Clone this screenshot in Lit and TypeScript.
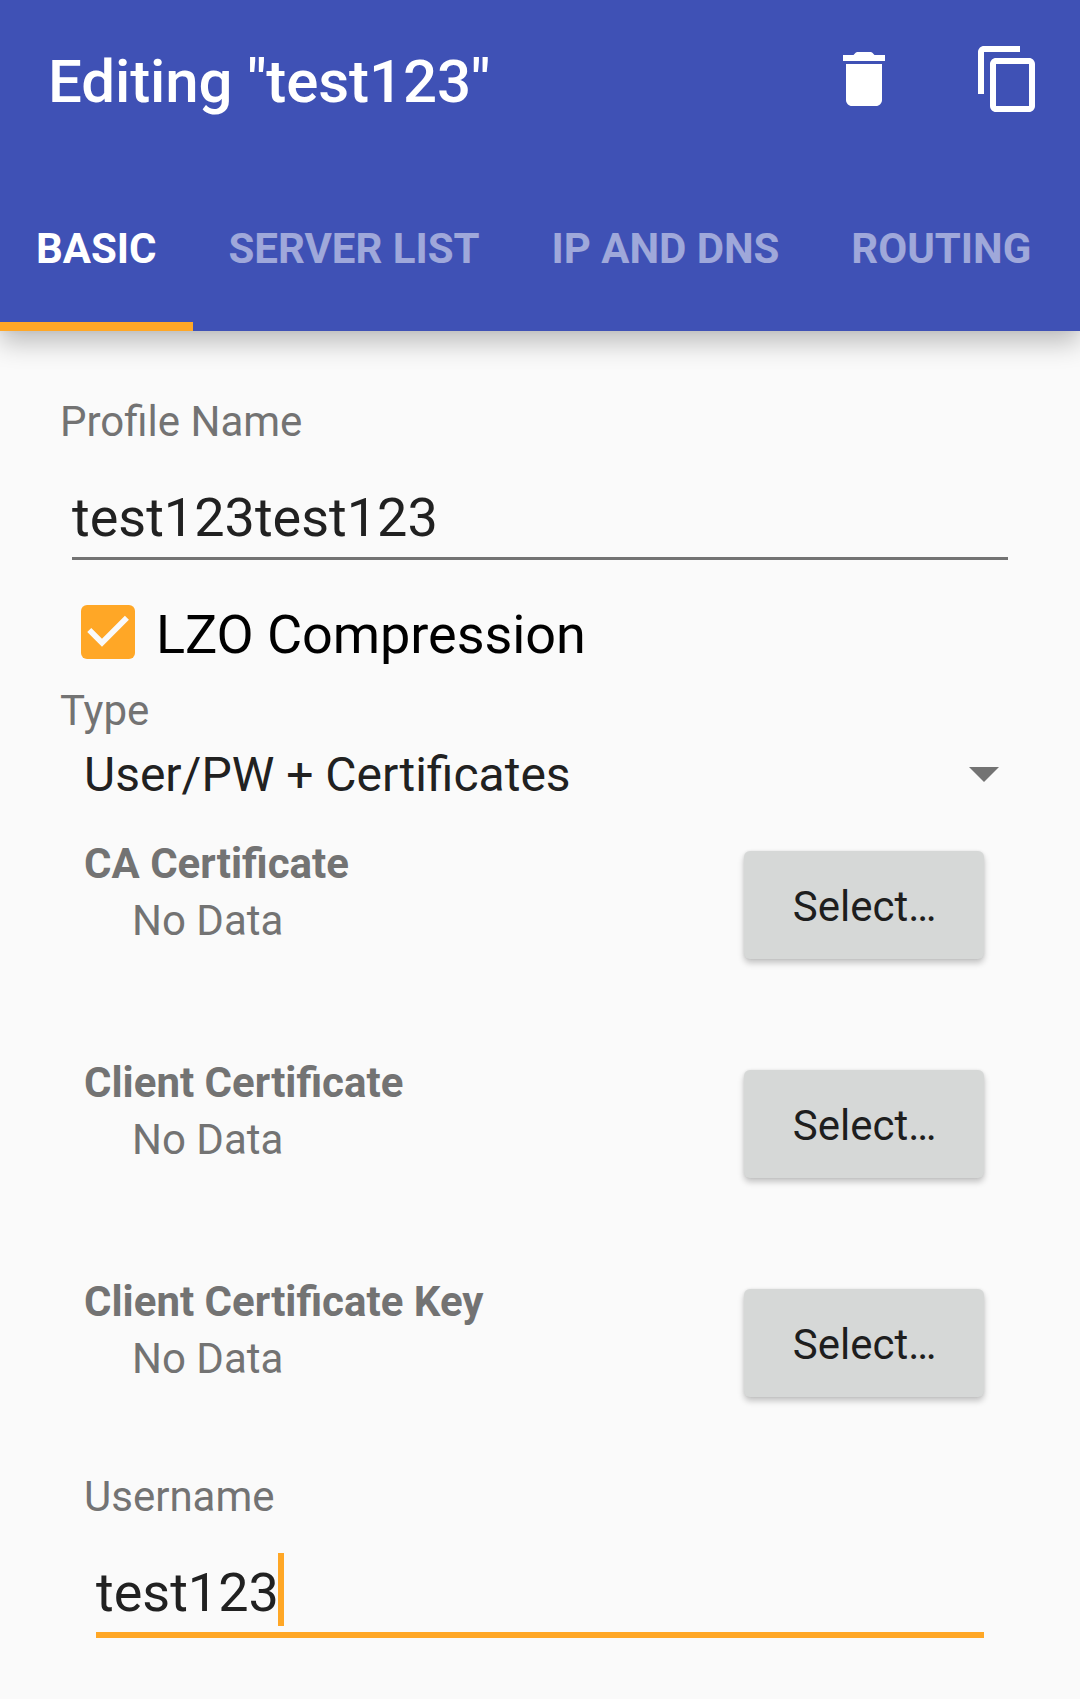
import { LitElement, html, css } from "lit";
import { customElement, property } from "lit/decorators.js";

@customElement("cert-row")
class CertRow extends LitElement {
  @property() name = "";

  static styles = css`
    :host { display: flex; justify-content: space-between; align-items: flex-start; height: 219px; }
    .name, .state { font-size: 42px; line-height: 50px; color: #737373; white-space: nowrap; }
    .name { font-weight: 700; }
    .state { margin-top: 7px; padding-left: 48px; }
    .select {
      display: flex; align-items: center; justify-content: center;
      box-sizing: border-box; width: 240px; height: 108px; margin: 12px 0 0; padding: 4px 0 0 1px;
      border: 0; border-radius: 6px; background: #d6d8d7; color: #1e1e1e;
      font: 400 42px/50px Roboto, sans-serif;
      box-shadow: 0 4px 6px rgba(0, 0, 0, 0.22), 0 0 3px rgba(0, 0, 0, 0.08);
    }
  `;

  render() {
    return html`
      <div>
        <div class="name">${this.name}</div>
        <div class="state">No Data</div>
      </div>
      <button class="select">Select…</button>
    `;
  }
}

@customElement("app-root")
class AppRoot extends LitElement {
  private tabs = ["BASIC", "SERVER LIST", "IP AND DNS", "ROUTING"];
  private certs = ["CA Certificate", "Client Certificate", "Client Certificate Key"];

  static styles = css`
    :host {
      display: block; width: 1080px; height: 1699px; overflow: hidden;
      background: #fafafa; font-family: Roboto, sans-serif; color: #212121;
    }
    .header {
      display: flex; flex-direction: column; height: 331px; background: #3f51b5; color: #fff;
      box-shadow: 0 12px 24px rgba(0, 0, 0, 0.24), 0 0 8px rgba(0, 0, 0, 0.05);
    }
    .bar { display: flex; align-items: center; height: 158px; padding: 0 36px 0 48px; }
    .title {
      flex: 1; margin: 0; padding-top: 5px;
      font-size: 60px; line-height: 70px; font-weight: 500; letter-spacing: -0.1px;
    }
    .icon { display: block; width: 72px; height: 72px; fill: currentColor; }
    .actions { display: flex; gap: 72px; }
    .tabs { display: flex; flex: 1; }
    .tab {
      display: flex; align-items: center; box-sizing: border-box; padding: 17px 36px 0;
      border-bottom: 9px solid transparent;
      font-size: 42px; line-height: 50px; font-weight: 700; white-space: nowrap;
      letter-spacing: -0.03px; color: rgba(255, 255, 255, 0.5);
    }
    .tab.active { color: #fff; border-bottom-color: #ffa726; }
    .form { display: flex; flex-direction: column; padding: 66px 72px 0 60px; }
    .label { font-size: 42px; line-height: 50px; color: #737373; }
    .field {
      box-sizing: border-box; font-size: 54px; line-height: 64px;
      display: flex; align-items: flex-start;
    }
    .profile { margin: 39px 0 0 12px; height: 74px; border-bottom: 3px solid #737373; }
    .check { display: flex; align-items: center; gap: 21px; margin: 43px 0 0 21px; height: 58px; }
    .box { display: block; width: 54px; height: 54px; }
    .check-label {
      font-size: 54px; line-height: 64px; letter-spacing: -0.07px; color: #000; padding-top: 5px;
    }
    .type { margin-top: 25px; }
    .spinner {
      display: flex; align-items: center; justify-content: space-between;
      margin: 11px 9px 0 24px; height: 56px; font-size: 48px; line-height: 56px;
    }
    .arrow { display: block; width: 30px; height: 15px; margin-bottom: 1px; fill: #737373; }
    .details { display: flex; flex-direction: column; margin: 36px 24px 0 24px; }
    .user-label { margin-top: -24px; }
    .user { margin: 29px 0 0 12px; height: 87px; border-bottom: 6px solid #ffa726; }
    .user-text { padding-top: 10px; }
    .caret { width: 6px; height: 73px; margin: 2px 0 0 -1px; background: #ffa726; }
  `;

  render() {
    return html`
      <header class="header">
        <div class="bar">
          <h1 class="title">Editing "test123"</h1>
          <div class="actions">
            <svg class="icon" viewBox="0 0 24 24">
              <path d="M6 19c0 1.1.9 2 2 2h8c1.1 0 2-.9 2-2V7H6v12zM19 4h-3.5l-.7-.75Q14.55 3 14.2 3H9.8Q9.45 3 9.2 3.25L8.5 4H5v2h14V4z" />
            </svg>
            <svg class="icon" viewBox="0 0 24 24">
              <path d="M16 1H4c-1.1 0-2 .9-2 2v14h2V3h12V1zm3 4H8c-1.1 0-2 .9-2 2v14c0 1.1.9 2 2 2h11c1.1 0 2-.9 2-2V7c0-1.1-.9-2-2-2zm0 16H8V7h11v14z" />
            </svg>
          </div>
        </div>
        <nav class="tabs">
          ${this.tabs.map((t, i) => html`<div class="tab ${i === 0 ? "active" : ""}">${t}</div>`)}
        </nav>
      </header>
      <main class="form">
        <div class="label">Profile Name</div>
        <div class="field profile">test123test123</div>
        <div class="check">
          <svg class="box" viewBox="0 0 18 18">
            <rect width="18" height="18" rx="2" fill="#ffa726" />
            <path d="M2.75 8.3L7 12.55L15.3 4.25" fill="none" stroke="#fafafa" stroke-width="1.9" />
          </svg>
          <span class="check-label">LZO Compression</span>
        </div>
        <div class="label type">Type</div>
        <div class="spinner">
          <span>User/PW + Certificates</span>
          <svg class="arrow" viewBox="0 0 30 15"><path d="M0 0h30L15 15z" /></svg>
        </div>
        <section class="details">
          ${this.certs.map((c) => html`<cert-row name=${c}></cert-row>`)}
          <div class="label user-label">Username</div>
          <div class="field user"><span class="user-text">test123</span><span class="caret"></span></div>
        </section>
      </main>
    `;
  }
}
